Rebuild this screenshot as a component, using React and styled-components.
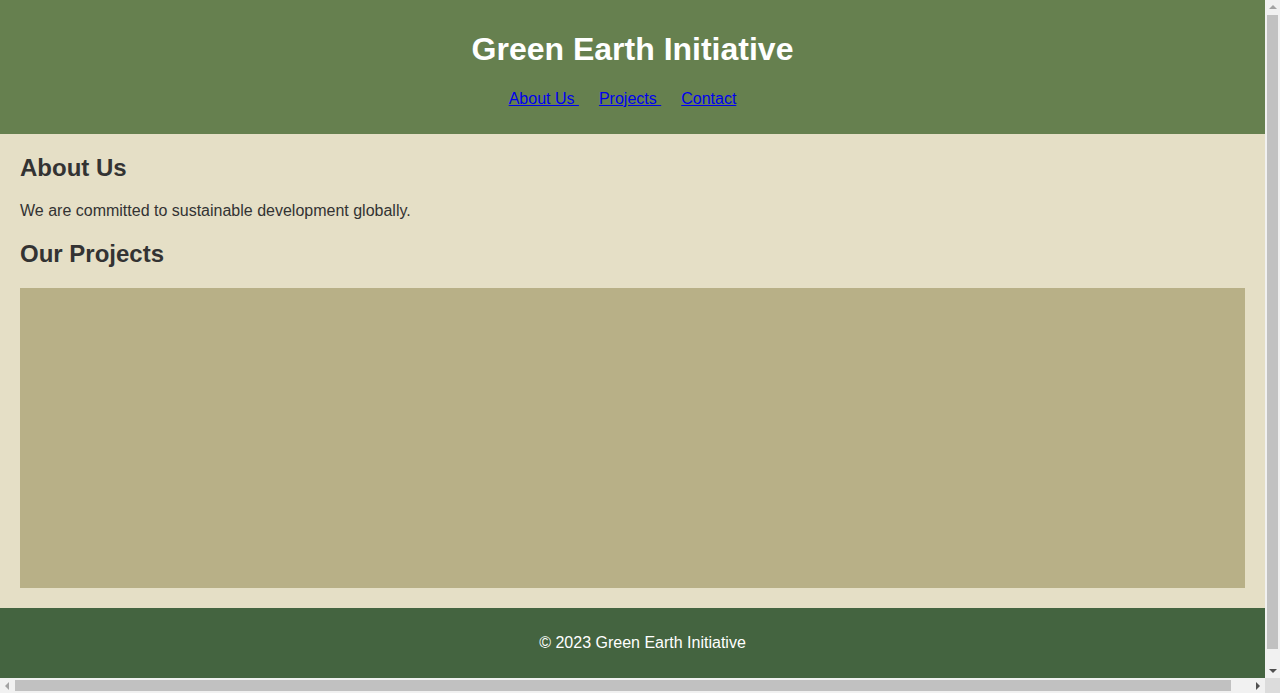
import React from "react";
import styled, { createGlobalStyle } from "styled-components";

const GlobalStyle = createGlobalStyle`
  html, body {
    margin: 0;
    height: 100%;
    overflow: hidden;
  }
  body {
    font-family: "Liberation Sans", Arial, sans-serif;
    background: #e5dfc6;
    color: #333333;
  }
`;

const Viewport = styled.div`
  width: calc(100vw - 15px);
  height: calc(100vh - 15px);
  overflow: hidden;
`;

const Header = styled.header`
  background: #66804f;
  color: #ffffff;
  text-align: center;
  padding: 10px;
`;

const Title = styled.h1`
  font-size: 32px;
  margin: 21.44px 0;
`;

const NavList = styled.ul`
  list-style: none;
  padding: 0;
  margin: 16px 0;
`;

const NavItem = styled.li`
  display: inline;
  margin-right: 20px;
`;

const NavLink = styled.a`
  color: #0000ee;
  text-decoration: underline;
`;

const Main = styled.main`
  padding: 20px;
  background: #e5dfc6;
`;

const Section = styled.section`
  margin-bottom: ${(p) => (p.$last ? "0" : "20px")};
`;

const Heading = styled.h2`
  font-size: 24px;
  margin: 0 0 20px;
`;

const Text = styled.p`
  font-size: 16px;
  margin: 0;
`;

const ProjectBox = styled.div`
  height: 300px;
  background: #b8b087;
`;

const Footer = styled.footer`
  background: #446440;
  color: #ffffff;
  text-align: center;
  width: 100%;
  padding: 10px 10px 26px;
`;

const FooterText = styled.p`
  margin: 16px 0;
  font-size: 16px;
`;

/* decorative scrollbars drawn over the page edge */
const VTrack = styled.div`
  position: fixed;
  top: 0;
  right: 0;
  width: 15px;
  height: calc(100vh - 15px);
  background: #f1f1f1;
  display: flex;
  flex-direction: column;
  align-items: center;
`;

const HTrack = styled.div`
  position: fixed;
  left: 0;
  bottom: 0;
  width: calc(100vw - 15px);
  height: 15px;
  background: #f1f1f1;
  display: flex;
  align-items: center;
`;

const Corner = styled.div`
  position: fixed;
  right: 0;
  bottom: 0;
  width: 15px;
  height: 15px;
  background: #dcdcdc;
`;

const ArrowCell = styled.div`
  width: 15px;
  height: 15px;
  flex: 0 0 15px;
  display: flex;
  align-items: center;
  justify-content: center;
`;

const Arrow = styled.span`
  width: 0;
  height: 0;
  border-style: solid;
  border-color: transparent;
  ${(p) =>
    p.$dir === "up"
      ? `border-width: 0 4px 4px 4px; border-bottom-color: ${p.$color}; margin-top: -1px;`
      : p.$dir === "down"
      ? `border-width: 4px 4px 0 4px; border-top-color: ${p.$color}; margin-top: 1px;`
      : p.$dir === "left"
      ? `border-width: 4px 4px 4px 0; border-right-color: ${p.$color}; margin-left: -2px;`
      : `border-width: 4px 0 4px 4px; border-left-color: ${p.$color}; margin-left: 1px;`}
`;

const VThumb = styled.div`
  width: 11px;
  height: 634px;
  background: #c1c1c1;
`;

const Spacer = styled.div`
  flex: 1;
`;

const HThumb = styled.div`
  height: 11px;
  width: 1216px;
  background: #c1c1c1;
`;

function Scrollbars() {
  return (
    <>
      <VTrack>
        <ArrowCell>
          <Arrow $dir="up" $color="#a3a3a3" />
        </ArrowCell>
        <VThumb />
        <Spacer />
        <ArrowCell>
          <Arrow $dir="down" $color="#505050" />
        </ArrowCell>
      </VTrack>
      <HTrack>
        <ArrowCell>
          <Arrow $dir="left" $color="#a3a3a3" />
        </ArrowCell>
        <HThumb />
        <Spacer />
        <ArrowCell>
          <Arrow $dir="right" $color="#505050" />
        </ArrowCell>
      </HTrack>
      <Corner />
    </>
  );
}

export default function App() {
  return (
    <>
      <GlobalStyle />
      <Viewport>
        <Header>
          <Title>Green Earth Initiative</Title>
          <nav>
            <NavList>
              <NavItem>
                <NavLink href="#about">About Us </NavLink>
              </NavItem>
              <NavItem>
                <NavLink href="#projects">Projects </NavLink>
              </NavItem>
              <NavItem>
                <NavLink href="#contact">Contact</NavLink>
              </NavItem>
            </NavList>
          </nav>
        </Header>
        <Main>
          <Section id="about">
            <Heading>About Us</Heading>
            <Text>We are committed to sustainable development globally.</Text>
          </Section>
          <Section id="projects" $last>
            <Heading>Our Projects</Heading>
            <ProjectBox />
          </Section>
        </Main>
        <Footer id="contact">
          <FooterText>© 2023 Green Earth Initiative</FooterText>
        </Footer>
      </Viewport>
      <Scrollbars />
    </>
  );
}
